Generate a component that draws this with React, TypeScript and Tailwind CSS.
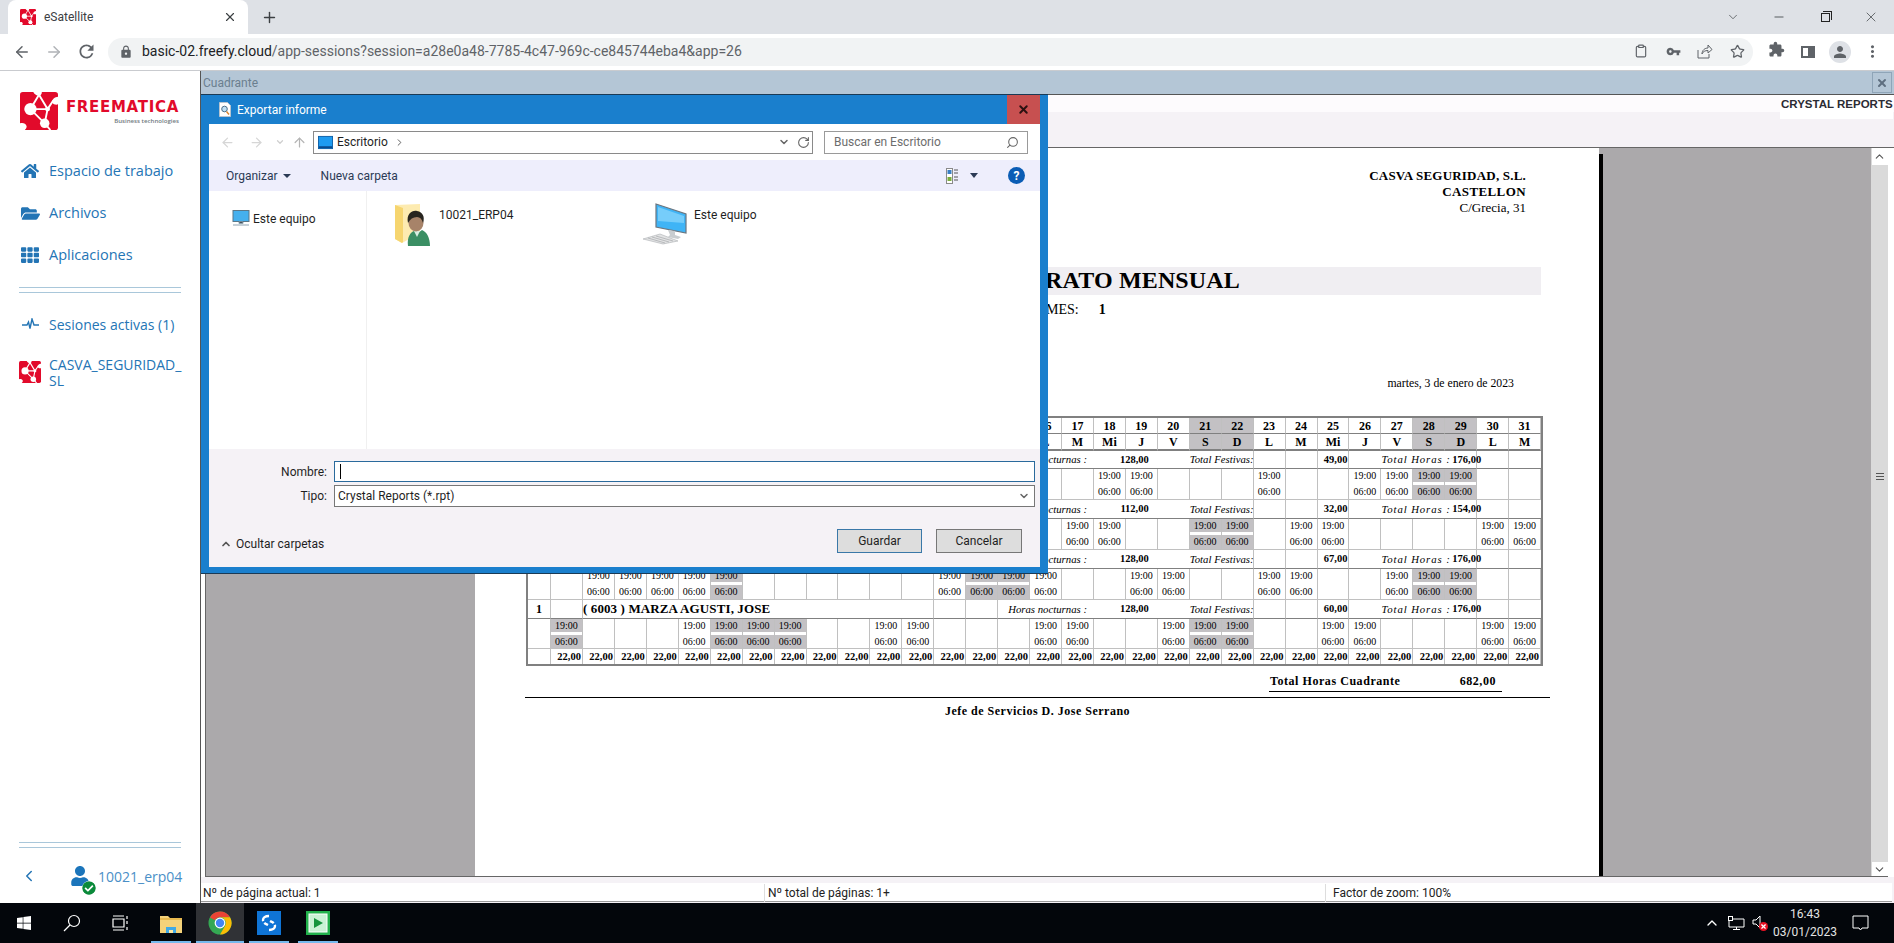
import React from "react";
import { ArrowLeft, ArrowRight, ChevronDown, ChevronLeft, ChevronUp, Clipboard, Minus, Plus, RotateCw, Search, Star, X } from "lucide-react";
import { FaCheckCircle, FaFolderOpen, FaHome, FaTh, FaUser, FaWindows } from "react-icons/fa";
import { MdExtension, MdLock, MdMoreVert, MdPerson, MdRefresh, MdVpnKey } from "react-icons/md";

const days = Array.from({ length: 31 }, (_, i) => i + 1);
const weekdays = ["D", "L", "M", "Mi", "J", "V", "S", "D", "L", "M", "Mi", "J", "V", "S", "D", "L", "M", "Mi", "J", "V", "S", "D", "L", "M", "Mi", "J", "V", "S", "D", "L", "M"];
const grayDays = [1, 6, 7, 8, 14, 15, 21, 22, 28, 29];

const groups = [
  { index: "", name: "", night: "128,00", holiday: "49,00", total: "176,00", shifts: [18, 19, 23, 26, 27, 28, 29] },
  { index: "", name: "", night: "112,00", holiday: "32,00", total: "154,00", shifts: [17, 18, 21, 22, 24, 25, 30, 31] },
  { index: "", name: "", night: "128,00", holiday: "67,00", total: "176,00", shifts: [2, 3, 4, 5, 6, 13, 14, 15, 16, 19, 20, 23, 24, 27, 28, 29] },
  { index: "1", name: "( 6003 ) MARZA AGUSTI, JOSE", night: "128,00", holiday: "60,00", total: "176,00", shifts: [1, 5, 6, 7, 8, 11, 12, 16, 17, 20, 21, 22, 25, 26, 30, 31] },
];

function LogoMark({ size }: { size: number }) {
  return (
    <svg width={size} height={size} viewBox="0 0 40 40">
      <rect x="0" y="0" width="40" height="40" rx="3" fill="#e20a2b" />
      <path d="M14 0h9c0 2-1 4-3 4-3 0-5-2-6-4zM40 5v8c-2 1-5 0-6-2-1-3 3-6 6-6zM0 33c3-1 6 0 7 3 0 2-1 3-2 4H0z" fill="#fff" />
      <path d="M20 3L29 18M35 9L29 18M11 18L29 18M29 18L26 33M11 18L26 33M26 33L32 40M11 18L20 3" stroke="#fff" strokeWidth="2" fill="none" />
      <circle cx="11" cy="18" r="6.5" fill="#fff" />
      <circle cx="26" cy="33" r="5" fill="#fff" />
      <circle cx="29" cy="18" r="2.6" fill="#fff" />
    </svg>
  );
}

function Sidebar() {
  const itemClass = "flex h-[42px] items-center";
  return (
    <div className="flex w-[200px] shrink-0 flex-col bg-white font-['Open_Sans',sans-serif] text-[14px] text-[#2475b5]">
      <div className="ml-5 mt-[21px] flex h-[38px] items-start gap-[5px]">
        <LogoMark size={38} />
        <div className="flex w-[116px] flex-col items-end pt-[7px]">
          <span className="font-['DejaVu_Sans',sans-serif] text-[15px] font-bold leading-[17px] tracking-[0.7px] text-[#e20a2b]">FREEMATICA</span>
          <span className="text-[6.1px] font-semibold leading-[10px] text-[#6f7a80]">Business technologies</span>
        </div>
      </div>
      <div className="flex flex-col pl-[21px] pt-5 text-[14.5px]">
        <div className={itemClass}><FaHome size={18} className="mr-[10px]" />Espacio de trabajo</div>
        <div className={itemClass}><FaFolderOpen size={19} className="mr-[9px]" />Archivos</div>
        <div className={itemClass}><FaTh size={18} className="mr-[10px]" />Aplicaciones</div>
      </div>
      <div className="mx-[19px] mt-[11px] h-[6px] border-y border-[#a9c7da]" />
      <div className="ml-[22px] mt-[21px] flex h-5 items-center gap-[10px]">
        <svg width="17" height="12" viewBox="0 0 17 12" fill="none" stroke="#2475b5" strokeWidth="1.4">
          <path d="M0 7h5l1.5-3L8 10.5 10 1l2 6h5" />
        </svg>
        Sesiones activas (1)
      </div>
      <div className="ml-[19px] mt-[23px] flex items-start gap-2">
        <div className="mt-1"><LogoMark size={22} /></div>
        <div className="w-[134px] break-all leading-4">CASVA_SEGURIDAD_ SL</div>
      </div>
      <div className="mx-[19px] mt-auto h-[6px] border-y border-[#a9c7da]" />
      <div className="mb-[7px] mt-2 flex h-10 items-center pl-[20px] text-[#4a8fc7]">
        <ChevronLeft size={18} strokeWidth={2} className="text-[#2475b5]" />
        <div className="relative ml-[32px] mr-[8px] text-[#1b75bb]">
          <FaUser size={20} />
          <FaCheckCircle size={14} className="absolute -right-[6px] top-[15px] rounded-full bg-white text-[#0b8a3a]" />
        </div>
        10021_erp04
      </div>
    </div>
  );
}

function PersonFolder() {
  return (
    <svg width="36" height="43" viewBox="0 0 36 43">
      <path d="M0 2L25 1V30L7 40L0 36z" fill="#fdebb0" />
      <path d="M0 2L8 5V39L7 40L0 36z" fill="#f6d56f" />
      <path d="M13 43c-1-9 2-14 8-16l2 3 4-3c5 2 8 8 8 16z" fill="#3b8f64" />
      <path d="M19 28l3 6 3-6" fill="#d9efe2" />
      <ellipse cx="21" cy="20" rx="7.5" ry="8.5" fill="#a78369" />
      <path d="M13 20c-2-9 4-13 9-12 6 1 8 6 6 12-1-4-3-6-6-6-4 0-7 2-9 6z" fill="#28251f" />
    </svg>
  );
}

function ComputerIcon() {
  return (
    <svg width="44" height="43" viewBox="0 0 44 43">
      <path d="M13 1L43 11V30L13 24z" fill="#3fb4f6" stroke="#6b7680" strokeWidth="1.2" />
      <path d="M15 4L41 13V20L15 18z" fill="#76cdfa" />
      <path d="M25 27l7 1v4l6 2-3 2-10-2 2-2z" fill="#c9cdd0" />
      <path d="M0 36L17 31L35 38L20 41z" fill="#e2e3e4" stroke="#adb0b3" strokeWidth="0.6" />
      <path d="M5 35l17 5M9 34l17 5M13 33l17 5" stroke="#a5a8ab" strokeWidth="0.7" />
    </svg>
  );
}

function DesktopIcon({ w, h }: { w: number; h: number }) {
  return (
    <svg width={w} height={h} viewBox="0 0 16 16">
      <rect x="0.5" y="1.5" width="15" height="13" fill="#1e9bf0" stroke="#0c5fa8" />
      <rect x="1" y="12" width="14" height="2" fill="#0a4a8c" />
    </svg>
  );
}

function Dialog() {
  return (
    <div className="absolute left-0 top-[23px] z-10 flex h-[480px] w-[847px] flex-col border-y border-[#1a3a55] bg-[#1a7fcd] px-2 pb-[6px] font-['Roboto',sans-serif] text-[12px] text-[#1f1f1f]">
      <div className="flex h-[29px] shrink-0 items-center">
        <svg width="12" height="15" viewBox="0 0 12 15" className="ml-[10px]">
          <path d="M0.5 0.5h8l3 3v11h-11z" fill="#fff" stroke="#b8c4cf" />
          <circle cx="5.5" cy="7" r="2.8" fill="#bfe0f5" stroke="#4a6f8a" />
          <path d="M7.5 9.5l2.5 3" stroke="#d9822b" strokeWidth="1.4" />
        </svg>
        <span className="ml-[6px] text-white">Exportar informe</span>
        <div className="ml-auto flex h-[29px] w-[33px] items-center justify-center bg-[#c75050]">
          <X size={13} strokeWidth={3.5} className="text-[#2b1111]" />
        </div>
      </div>
      <div className="flex h-[36px] shrink-0 items-center bg-white">
        <ArrowLeft size={15} className="ml-[11px] text-[#d6d6d6]" />
        <ArrowRight size={15} className="ml-[14px] text-[#d6d6d6]" />
        <ChevronDown size={10} strokeWidth={3} className="ml-[11px] text-[#cfcfcf]" />
        <ArrowLeft size={15} className="ml-[7px] rotate-90 text-[#b5b5b5]" />
        <div className="ml-[6px] flex h-[23px] w-[500px] items-center border border-[#8a8a8a] pl-1">
          <DesktopIcon w={15} h={15} />
          <span className="ml-[4px]">Escritorio</span>
          <ChevronLeft size={11} className="ml-[6px] rotate-180 text-[#555]" />
          <ChevronDown size={12} strokeWidth={3} className="ml-auto text-[#666]" />
          <RotateCw size={13} className="ml-[7px] mr-[2px] text-[#666]" />
        </div>
        <div className="ml-[11px] flex h-[23px] w-[204px] items-center border border-[#9a9a9a] pl-[9px] pr-2 text-[#6d6d6d]">
          Buscar en Escritorio
          <Search size={13} className="ml-auto -scale-x-100 text-[#666]" />
        </div>
      </div>
      <div className="flex h-[31px] shrink-0 items-center bg-[#eeeefc] pl-[17px] text-[#2b3a55]">
        Organizar
        <span className="ml-[5px] h-0 w-0 border-x-[4px] border-t-[4px] border-x-transparent border-t-[#2b3a55]" />
        <span className="ml-[30px]">Nueva carpeta</span>
        <div className="ml-auto flex items-center">
          <svg width="12" height="16" viewBox="0 0 12 16">
            <rect x="0.5" y="0.5" width="6" height="15" fill="#fff" stroke="#8a8a8a" />
            <rect x="1.5" y="2" width="4" height="4" fill="#3a7fc4" />
            <rect x="1.5" y="9" width="4" height="4" fill="#7bae3c" />
            <path d="M8 2h4M8 5h4M8 9h4M8 12h4" stroke="#555" />
          </svg>
          <span className="ml-3 h-0 w-0 border-x-[4px] border-t-[5px] border-x-transparent border-t-[#2b3a55]" />
          <div className="ml-[30px] mr-[15px] flex h-[17px] w-[17px] items-center justify-center rounded-full bg-[#0b5db5] text-[12px] font-bold text-white">?</div>
        </div>
      </div>
      <div className="flex h-[258px] shrink-0 bg-white">
        <div className="flex w-[158px] shrink-0 items-start border-r border-[#f0f0f0] pl-[23px] pt-[19px]">
          <svg width="18" height="16" viewBox="0 0 18 16">
            <rect x="1" y="0.5" width="16" height="11" fill="#45b0ee" stroke="#5b7787" />
            <path d="M7 12h4v1.5H7zM1 15h16" stroke="#8da2b0" />
          </svg>
          <span className="ml-[3px]">Este equipo</span>
        </div>
        <div className="ml-[28px] mt-3 flex w-[248px] items-start">
          <PersonFolder />
          <span className="ml-[8px] mt-[3px]">10021_ERP04</span>
        </div>
        <div className="mt-3 flex items-start">
          <ComputerIcon />
          <span className="ml-[7px] mt-[3px]">Este equipo</span>
        </div>
      </div>
      <div className="relative flex flex-1 flex-col bg-[#f5f2f6] pr-[5px]">
        <div className="mt-3 flex h-[21px] items-center">
          <span className="w-[118px] text-right">Nombre:</span>
          <div className="ml-[7px] flex h-[21px] flex-1 items-center border border-[#2a6a9c] bg-white pl-[5px]">
            <span className="h-[15px] w-px bg-black" />
          </div>
        </div>
        <div className="mt-[3px] flex h-[22px] items-center">
          <span className="w-[118px] text-right">Tipo:</span>
          <div className="ml-[7px] flex h-[22px] flex-1 items-center justify-between border border-[#777] bg-white pl-[3px] pr-1">
            Crystal Reports (*.rpt)
            <ChevronDown size={12} strokeWidth={3} className="text-[#666]" />
          </div>
        </div>
        <div className="mt-[22px] flex h-6 items-center pl-[11px]">
          <ChevronUp size={12} strokeWidth={3.5} className="mt-[6px] text-[#555]" />
          <span className="ml-[4px] mt-[6px]">Ocultar carpetas</span>
          <div className="ml-auto flex h-6 w-[85px] items-center justify-center border border-[#3a78a8] bg-[#dddddd]">Guardar</div>
          <div className="ml-[14px] mr-[13px] flex h-6 w-[86px] items-center justify-center border border-[#777] bg-[#dddddd]">Cancelar</div>
        </div>
      </div>
    </div>
  );
}

function ReportGrid() {
  const cell = "flex items-center justify-center border-r border-b border-[#c0c0c0]";
  const nameBase = "flex items-center border-b border-[#808080] whitespace-nowrap";
  const italic = "text-[10.75px] italic";
  const bold = "text-[10.5px] font-bold";
  return (
    <div className="ml-[51px] mt-6 w-fit border-2 border-[#808080] font-['Liberation_Serif',serif] text-black">
      <div className="grid grid-cols-[23px_repeat(31,31.95px)] grid-rows-[15px_18px_18px_31px_19px_31px_19px_31px_19px_30px_15px]">
        <div className="row-span-2 border-b-2 border-r border-[#808080]" />
        {days.map((d) => (
          <div key={d} className={`flex items-center justify-center border-r border-[#c0c0c0] text-[12px] font-bold ${grayDays.includes(d) ? "bg-[#c3c1c4]" : ""}`}>{d}</div>
        ))}
        {days.map((d) => (
          <div key={d} className={`flex items-center justify-center border-t border-b-2 border-r border-t-[#808080] border-b-[#808080] border-r-[#c0c0c0] text-[12px] font-bold ${grayDays.includes(d) ? "bg-[#c3c1c4]" : ""}`}>{weekdays[d - 1]}</div>
        ))}
        {groups.map((g, gi) => (
          <React.Fragment key={gi}>
            <div className={`${nameBase} justify-center border-r border-r-[#c0c0c0] text-[12px] font-bold`}>{g.index}</div>
            <div className={`${nameBase} border-r border-r-[#c0c0c0]`} />
            <div className={`${nameBase} col-span-11 border-r border-r-[#c0c0c0] text-[13px] font-bold tracking-[0.12px]`}>{g.name}</div>
            <div className={`${nameBase} border-r border-r-[#c0c0c0]`} />
            <div className={`${nameBase} border-r border-r-[#c0c0c0]`} />
            <div className={`${nameBase} ${italic} col-span-3 pl-[10px]`}>Horas nocturnas :</div>
            <div className={`${nameBase} ${bold} col-span-3 justify-end pr-[41px]`}>{g.night}</div>
            <div className={`${nameBase} ${italic} col-span-2 border-r border-r-[#c0c0c0]`}>Total Festivas:</div>
            <div className={`${nameBase} border-r border-r-[#c0c0c0]`} />
            <div className={`${nameBase} border-r border-r-[#c0c0c0]`} />
            <div className={`${nameBase} ${bold} justify-end border-r border-r-[#c0c0c0] pr-px`}>{g.holiday}</div>
            <div className={nameBase} />
            <div className={`${nameBase} ${italic} col-span-2 tracking-[0.9px]`}>Total Horas :</div>
            <div className={`${nameBase} ${bold} border-r border-r-[#c0c0c0] pl-[7px]`}>{g.total}</div>
            <div className={`${nameBase} border-r border-r-[#c0c0c0]`} />
            <div className={nameBase} />
            <div className={`${cell} border-b-[#c0c0c0]`} />
            {days.map((d) => {
              const on = g.shifts.includes(d);
              const gray = on && grayDays.includes(d);
              return (
                <div key={d} className="flex flex-col border-r border-b border-[#c0c0c0] text-center text-[10px] leading-[12px]">
                  {on && (
                    <>
                      <div className={`h-[13px] pt-px ${gray ? "bg-[#c3c1c4]" : ""}`}>19:00</div>
                      <div className={`mt-[3px] flex-1 pt-px ${gray ? "bg-[#c3c1c4]" : ""}`}>06:00</div>
                    </>
                  )}
                </div>
              );
            })}
          </React.Fragment>
        ))}
        <div className="border-r border-[#c0c0c0]" />
        {days.map((d) => (
          <div key={d} className="flex items-center justify-end border-r border-[#c0c0c0] pr-px text-[10.5px] font-bold">22,00</div>
        ))}
      </div>
    </div>
  );
}

function ReportPage() {
  return (
    <div className="flex w-[1124px] shrink-0 flex-col bg-white font-['Liberation_Serif',serif] text-black">
      <div className="flex flex-col items-end pr-[73px] pt-5 text-[13px] leading-4">
        <span className="font-bold tracking-[0.2px]">CASVA SEGURIDAD, S.L.</span>
        <span className="font-bold tracking-[0.4px]">CASTELLON</span>
        <span>C/Grecia, 31</span>
      </div>
      <div className="ml-[50px] mt-[51px] flex h-[28px] w-[1016px] items-center justify-end bg-[#f0eef2] pb-[2px] pr-[301px] text-[24px] font-bold tracking-[0.15px]">
        CONTRATO MENSUAL
      </div>
      <div className="mt-[4px] flex h-5 items-center gap-5 pl-[571px] text-[14px]">
        <span>MES:</span>
        <span className="font-bold">1</span>
      </div>
      <div className="mt-[57px] h-4 pr-[85px] text-right text-[11.75px] leading-4">martes, 3 de enero de 2023</div>
      <ReportGrid />
      <div className="ml-[794px] mt-[7px] flex h-[19px] w-[233px] justify-between border-b border-black pl-px pr-[6px] text-[12px] font-bold leading-4 tracking-[0.55px]">
        <span>Total Horas Cuadrante</span>
        <span>682,00</span>
      </div>
      <div className="ml-[50px] mt-[5px] w-[1025px] border-t border-black pt-[5px] text-center text-[12px] font-bold leading-4 tracking-[0.5px]">
        Jefe de Servicios D. Jose Serrano
      </div>
    </div>
  );
}

function Main() {
  return (
    <div className="relative flex min-w-0 flex-1 flex-col border-l border-[#555] font-['Roboto',sans-serif]">
      <div className="flex h-[23px] shrink-0 items-center justify-between bg-[#b4c6d6] pl-[2px] pr-[2px] text-[12px] text-[#6b7f8f]">
        Cuadrante
        <div className="flex h-[21px] w-[20px] items-center justify-center border border-[#8fa5b8] text-[#5f6f80]">
          <X size={12} strokeWidth={4} />
        </div>
      </div>
      <div className="relative h-[54px] shrink-0 border-y border-t-[#555] border-b-[#666] bg-[#f5f2f6]">
        <div className="h-[17px] bg-[#fdfbfd]" />
        <div className="absolute right-[1px] top-0 h-[24px] w-[113px] whitespace-nowrap bg-white pl-px font-['Liberation_Sans',sans-serif] text-[11.5px] font-bold leading-[18px] text-[#2b2b33]">CRYSTAL REPORTS</div>
      </div>
      <div className="flex min-h-0 flex-1 pl-1 pr-[6px]">
        <div className="flex flex-1 overflow-hidden border-b border-l border-[#666] bg-[#aba9ab]">
          <div className="w-[269px] shrink-0" />
          <ReportPage />
          <div className="mt-[6px] w-1 shrink-0 bg-black" />
          <div className="flex-1" />
          <div className="flex w-[17px] shrink-0 flex-col items-center bg-[#dadada]">
            <div className="flex h-[17px] w-[16px] items-center justify-center bg-white"><ChevronUp size={13} className="text-[#555]" /></div>
            <div className="flex flex-1 items-start pt-[308px]"><span className="flex h-[7px] w-[8px] flex-col justify-between"><span className="h-px bg-[#555]" /><span className="h-px bg-[#555]" /><span className="h-px bg-[#555]" /></span></div>
            <div className="flex h-[14px] w-[16px] items-center justify-center bg-white"><ChevronDown size={13} className="text-[#555]" /></div>
          </div>
        </div>
      </div>
      <div className="flex h-[26px] shrink-0 flex-col bg-[#f5f2f6] pr-[2px] pt-[6px]">
        <div className="flex h-[19px] items-center border-b border-[#999] bg-white pt-px text-[12px] text-[#222]">
          <span className="w-[564px] border-r border-[#ddd] pl-[2px]">Nº de página actual: 1</span>
          <span className="w-[561px] border-r border-[#ddd] pl-[3px]">Nº total de páginas: 1+</span>
          <span className="pl-[7px]">Factor de zoom: 100%</span>
        </div>
      </div>
      <Dialog />
    </div>
  );
}

function Taskbar() {
  const line = "absolute bottom-0 h-[2px] bg-[#76b9ed]";
  return (
    <div className="flex h-10 shrink-0 items-center bg-[#03060b] font-['Roboto',sans-serif] text-[12px] text-white">
      <FaWindows size={16} className="ml-4" />
      <svg width="18" height="18" viewBox="0 0 18 18" fill="none" stroke="#fff" strokeWidth="1.2" className="ml-[31px]">
        <circle cx="11" cy="7" r="5.5" /><path d="M7 11l-6 6" />
      </svg>
      <svg width="17" height="16" viewBox="0 0 17 16" fill="none" stroke="#fff" strokeWidth="1.2" className="ml-[31px]">
        <path d="M1 4h11v8H1zM1 1h11M1 15h11M15 1v3M15 6v3M15 12v3" />
      </svg>
      <div className="relative ml-[22px] flex h-10 w-[40px] items-center justify-center">
        <svg width="22" height="20" viewBox="0 0 22 20">
          <path d="M0 3h8l2 2h12v15H0z" fill="#f4d27a" />
          <path d="M0 5h22v2H0z" fill="#e8b94f" />
          <path d="M6 14h10v6H6z" fill="#3fa9e6" />
          <path d="M9 17h4v3H9z" fill="#fbe8a6" />
        </svg>
        <span className={`${line} inset-x-0`} />
      </div>
      <div className="relative ml-[5px] flex h-10 w-[48px] items-center justify-center bg-[#303236]">
        <svg width="24" height="24" viewBox="0 0 24 24">
          <circle cx="12" cy="12" r="11.5" fill="#34a853" />
          <path d="M12 .5a11.5 11.5 0 0 1 10 5.75H12a5.75 5.75 0 0 0-5 2.9L2 6.4A11.5 11.5 0 0 1 12 .5z" fill="#ea4335" />
          <path d="M22 6.25A11.5 11.5 0 0 1 12 23.5l5-8.6a5.75 5.75 0 0 0-5-8.65z" fill="#fbbc05" />
          <circle cx="12" cy="12" r="5.4" fill="#fff" />
          <circle cx="12" cy="12" r="4.2" fill="#4285f4" />
        </svg>
        <span className={`${line} inset-x-0`} />
      </div>
      <div className="relative ml-[5px] flex h-10 w-[40px] items-center justify-center">
        <svg width="24" height="24" viewBox="0 0 24 24">
          <rect width="24" height="24" fill="#0f74d6" />
          <path d="M12 5c-4 0-6 2-6 4 0 3 3 4 5 5M12 19c4 0 6-2 6-4 0-3-3-4-5-5" stroke="#fff" strokeWidth="2.4" fill="none" strokeDasharray="9 2" />
        </svg>
        <span className={`${line} inset-x-0`} />
      </div>
      <div className="relative ml-[9px] flex h-10 w-[40px] items-center justify-center">
        <svg width="24" height="24" viewBox="0 0 24 24">
          <rect width="24" height="24" fill="#22b14c" />
          <rect x="3" y="3" width="18" height="18" fill="#c9f2d5" stroke="#fff" strokeWidth="1" />
          <path d="M8 7l9 5-9 5z" fill="#15953d" />
        </svg>
        <span className={`${line} inset-x-0`} />
      </div>
      <ChevronUp size={16} className="ml-auto" />
      <svg width="17" height="14" viewBox="0 0 17 14" fill="none" stroke="#fff" className="ml-[8px]">
        <path d="M1 3h15v8H1zM8.5 11v2M5 13.5h7" />
        <rect x="0.5" y="0.5" width="4" height="4" fill="#03060b" />
      </svg>
      <div className="relative ml-[7px] h-4 w-4">
        <svg width="10" height="14" viewBox="0 0 10 14" fill="none" stroke="#fff"><path d="M1 5h3l4-4v12L4 9H1z" /></svg>
        <span className="absolute bottom-0 right-0 flex h-[9px] w-[9px] items-center justify-center rounded-full bg-[#e81123]"><X size={7} strokeWidth={4} /></span>
      </div>
      <div className="ml-[5px] flex w-[64px] flex-col items-center text-[12px] leading-[18px] text-[#e4e4e4]">
        <span>16:43</span>
        <span>03/01/2023</span>
      </div>
      <svg width="17" height="17" viewBox="0 0 17 17" fill="none" stroke="#fff" className="ml-[15px] mr-[25px]">
        <path d="M1 1h15v12H10l-1.5 2L7 13H1z" />
      </svg>
    </div>
  );
}

export default function App() {
  return (
    <div className="flex h-[943px] w-[1894px] flex-col overflow-hidden bg-white font-['Roboto',sans-serif]">
      <div className="flex h-[34px] shrink-0 items-end bg-[#dee1e6] pl-2">
        <div className="flex h-[34px] w-[240px] items-center rounded-t-lg bg-white pl-3 pr-[11px]">
          <LogoMark size={16} />
          <span className="ml-2 text-[12px] text-[#3c4043]">eSatellite</span>
          <X size={14} className="ml-auto text-[#3c4043]" />
        </div>
        <Plus size={17} className="mb-[8px] ml-[13px] text-[#3c4043]" />
        <div className="ml-auto flex h-[34px] text-[#3c4043]">
          <div className="flex w-[46px] items-center justify-center"><ChevronDown size={14} strokeWidth={1.2} /></div>
          <div className="flex w-[46px] items-center justify-center"><Minus size={14} strokeWidth={1.4} /></div>
          <div className="flex w-[46px] items-center justify-center">
            <span className="relative block h-[9px] w-[9px] border border-[#222] before:absolute before:-right-[3px] before:-top-[3px] before:h-[9px] before:w-[9px] before:border-r before:border-t before:border-[#222]" />
          </div>
          <div className="flex w-[46px] items-center justify-center"><X size={16} strokeWidth={1.1} /></div>
        </div>
      </div>
      <div className="flex h-[37px] shrink-0 items-center border-b border-[#c9cbcf] bg-white pb-px text-[#5f6368]">
        <div className="ml-[6px] flex w-8 justify-center"><ArrowLeft size={18} strokeWidth={2} /></div>
        <div className="flex w-8 justify-center text-[#b0b3b7]"><ArrowRight size={18} strokeWidth={2} /></div>
        <div className="flex w-8 justify-center"><MdRefresh size={21} /></div>
        <div className="ml-[6px] flex h-7 w-[1645px] items-center rounded-full bg-[#f1f3f4] pl-[11px]">
          <MdLock size={14} />
          <span className="ml-[9px] whitespace-nowrap text-[14px] text-[#5f6368]"><span className="text-[#202124]">basic-02.freefy.cloud</span>/app-sessions?session=a28e0a48-7785-4c47-969c-ce845744eba4&amp;app=26</span>
          <div className="ml-auto flex">
            <div className="flex w-8 justify-center"><Clipboard size={14} /></div>
            <div className="flex w-8 justify-center"><MdVpnKey size={15} /></div>
            <div className="flex w-8 justify-center">
              <svg width="16" height="15" viewBox="0 0 16 15" fill="none" stroke="#5f6368"><path d="M1 6v8h11v-4M5 10c0-4 3-6 6-6V1l4 4.5L11 9V6.5c-3 0-5 1-6 3.5z" /></svg>
            </div>
            <div className="flex w-8 justify-center"><Star size={15} /></div>
          </div>
        </div>
        <div className="ml-[7px] flex">
          <div className="flex w-8 justify-center"><MdExtension size={17} /></div>
          <div className="flex w-8 items-center justify-center">
            <span className="flex h-[12px] w-[14px] border-2 border-[#5f6368]"><span className="ml-auto h-full w-[5px] bg-[#5f6368]" /></span>
          </div>
          <div className="flex w-8 justify-center"><span className="flex h-[22px] w-[22px] items-center justify-center rounded-full bg-[#dee1e6]"><MdPerson size={18} /></span></div>
          <div className="flex w-8 items-center justify-center"><MdMoreVert size={19} /></div>
        </div>
      </div>
      <div className="flex min-h-0 flex-1">
        <Sidebar />
        <Main />
      </div>
      <Taskbar />
    </div>
  );
}
